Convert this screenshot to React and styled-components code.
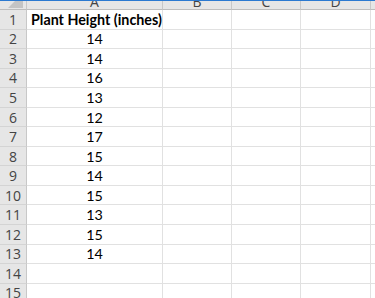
import React from 'react';
import styled, { createGlobalStyle } from 'styled-components';

const GlobalStyle = createGlobalStyle`
  html, body {
    margin: 0;
    padding: 0;
    background: #ffffff;
    overflow: hidden;
  }
`;

const COLS = [
  { key: 'A', width: 136 },
  { key: 'B', width: 69 },
  { key: 'C', width: 69 },
  { key: 'D', width: 70 },
  { key: 'E', width: 60 }
];

const ROW_HEIGHT = 19.55;

const Sheet = styled.div`
  width: 375px;
  height: 298px;
  overflow: hidden;
  border-top: 1px solid #2b79d0;
  box-sizing: border-box;
`;

const Row = styled.div`
  display: flex;
  height: ${p => p.height}px;
  box-sizing: border-box;
`;

const Corner = styled.div`
  position: relative;
  flex: 0 0 27px;
  background: #e6e6e6;
  border-right: 1px solid #c8c8c8;
  border-bottom: 1px solid #bdbdbd;
  box-sizing: border-box;
  overflow: hidden;

  &::after {
    content: '';
    position: absolute;
    right: 3px;
    bottom: 1px;
    width: 0;
    height: 0;
    border-left: 15px solid transparent;
    border-bottom: 15px solid #c4c4c4;
  }
`;

const ColHeader = styled.div`
  flex: 0 0 ${p => p.width}px;
  background: #e6e6e6;
  border-right: 1px solid #c8c8c8;
  border-bottom: 1px solid #bdbdbd;
  box-sizing: border-box;
  overflow: hidden;
  font-family: 'Open Sans', 'Noto Sans', sans-serif;
  font-size: 14px;
  color: #444444;
  text-align: center;
  line-height: 1;

  span {
    display: block;
    margin-top: -6px;
  }
`;

const RowHeader = styled.div`
  flex: 0 0 27px;
  background: #e6e6e6;
  border-right: 1px solid #c8c8c8;
  border-bottom: 1px solid #d4d4d4;
  box-sizing: border-box;
  font-family: 'Open Sans', 'Noto Sans', sans-serif;
  font-size: 14px;
  color: #444444;
  display: flex;
  align-items: center;
  justify-content: center;
`;

const Cell = styled.div`
  flex: 0 0 ${p => p.width}px;
  border-right: 1px solid #e1e1e1;
  border-bottom: 1px solid #e1e1e1;
  box-sizing: border-box;
  font-family: Lato, 'Liberation Sans', sans-serif;
  font-size: 14.3px;
  font-weight: ${p => (p.bold ? 700 : 400)};
  color: #000000;
  display: flex;
  align-items: center;
  justify-content: ${p => (p.center ? 'center' : 'flex-start')};
  padding-left: ${p => (p.center ? 0 : 4)}px;
  white-space: nowrap;
  overflow: visible;
`;

const heights = [14, 14, 16, 13, 12, 17, 15, 14, 15, 13, 15, 14];

const rows = [
  { text: 'Plant Height (inches)', bold: true },
  ...heights.map(h => ({ text: String(h) })),
  { text: '' },
  { text: '' }
];

export default function App() {
  return (
    <>
      <GlobalStyle />
      <Sheet>
        <Row height={9}>
          <Corner />
          {COLS.map(c => (
            <ColHeader key={c.key} width={c.width}>
              <span>{c.key}</span>
            </ColHeader>
          ))}
        </Row>
        {rows.map((r, i) => (
          <Row key={i} height={ROW_HEIGHT}>
            <RowHeader>{i + 1}</RowHeader>
            {COLS.map((c, j) => (
              <Cell
                key={c.key}
                width={c.width}
                bold={j === 0 && r.bold}
                center={j === 0 && !r.bold}
              >
                {j === 0 ? r.text : ''}
              </Cell>
            ))}
          </Row>
        ))}
      </Sheet>
    </>
  );
}
